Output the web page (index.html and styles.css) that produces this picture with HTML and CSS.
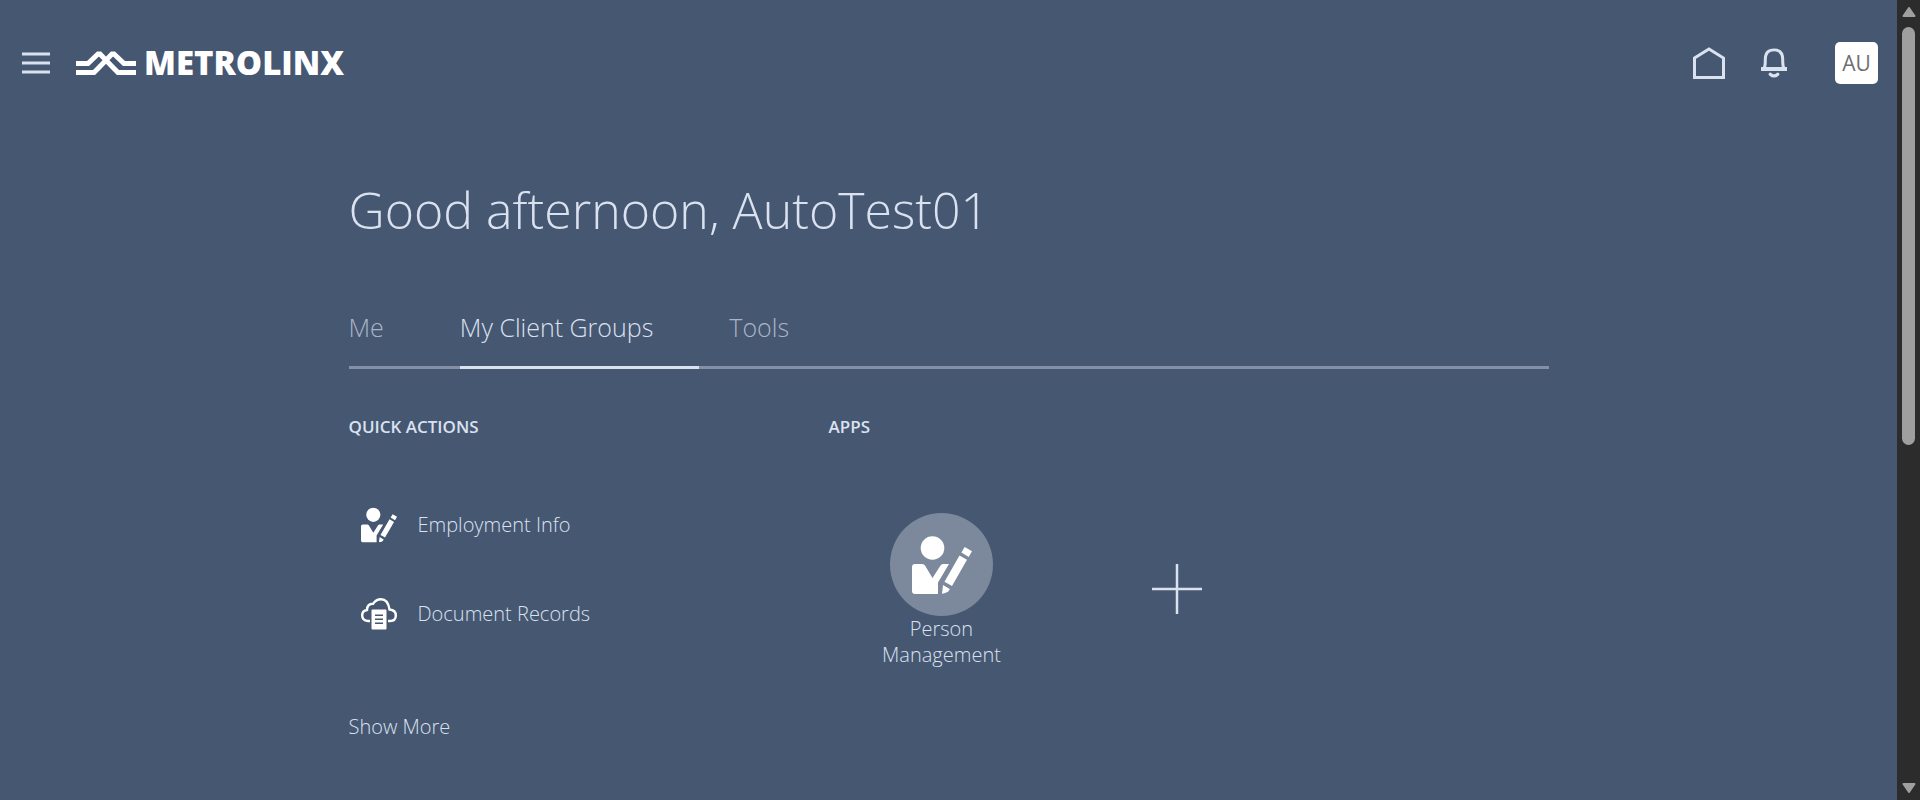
FILE: index.html
```html
<!DOCTYPE html>
<html lang="en">
<head>
<meta charset="utf-8">
<title>Metrolinx</title>
<link rel="stylesheet" href="styles.css">
</head>
<body>
<svg class="symbols" aria-hidden="true">
  <symbol id="person-edit" viewBox="0 0 60 58">
    <circle cx="20.500" cy="12" r="11.800"/>
    <path d="M3 28h7.500q1.500 0 2.500 1.500l7.500 12.500 8-12.500q1-1.500 2.500-1.500h6L26 46.500V58H3q-3 0-3-3V31q0-3 3-3z"/>
    <path d="M47.500 19.500l7.500 4.300L40 50l-7.500-4.300z"/>
    <path d="M52.700 11l7.300 4.300-3.300 5.600-7.300-4.300z"/>
    <path d="M31 49l6.800 4-1.500 2.600q-2.800 1.900-6.300 2.100z"/>
  </symbol>
</svg>
<div class="shell">
  <div class="page">
    <header class="header">
      <button class="icon-button" type="button" aria-label="Navigator">
        <svg class="menu-icon" viewBox="0 0 28 22"><path d="M0 2h28M0 11h28M0 20h28" stroke="currentColor" stroke-width="3"/></svg>
      </button>
      <a class="logo" href="#">
        <svg class="logo-mark" viewBox="0 0 60 24" aria-hidden="true">
          <path d="M0 12.500h12L22 3h2l14 14.500 4 4h18M0 21.500h18l4-4L36 3h2l10 9.500h12" fill="none" stroke="currentColor" stroke-width="5"/>
        </svg>
        <span class="logo-text">METROLINX</span>
      </a>
      <nav class="header-tools" aria-label="Global">
        <a class="icon-button" href="#" aria-label="Home">
          <svg class="home-icon" viewBox="0 0 32 32"><path d="M1.500 11L16 2l14.500 9v19.500h-29z" fill="none" stroke="currentColor" stroke-width="3"/></svg>
        </a>
        <button class="icon-button" type="button" aria-label="Notifications">
          <svg class="bell-icon" viewBox="0 0 26 30">
            <path d="M0 19h2q.8-2 .8-7.500Q2.800.5 13 .5t10.200 11q0 5.500.8 7.500h2v4H0zM5.200 19h15.600q-.6-2-.6-7.500Q20.200 3.300 13 3.300t-7.200 8.200q0 5.500-.6 7.500z" fill="currentColor" fill-rule="evenodd"/>
            <path d="M9.200 26.200q3.800 3.400 7.600 0" fill="none" stroke="currentColor" stroke-width="3.200" stroke-linecap="round"/>
          </svg>
        </button>
        <button class="avatar" type="button">AU</button>
      </nav>
    </header>
    <main class="content">
      <h1 class="greeting">Good afternoon, AutoTest01</h1>
      <nav class="tabs" aria-label="Springboard">
        <a class="tab" href="#">Me</a>
        <a class="tab tab-active" href="#" aria-current="page">My Client Groups</a>
        <a class="tab" href="#">Tools</a>
      </nav>
      <div class="columns">
        <section>
          <h2 class="section-title">QUICK ACTIONS</h2>
          <ul class="actions">
            <li><a class="action" href="#">
              <svg class="action-icon" viewBox="0 0 60 58" aria-hidden="true"><use href="#person-edit"/></svg>
              <span>Employment Info</span>
            </a></li>
            <li><a class="action" href="#">
              <svg class="action-icon" viewBox="0 0 36 32" aria-hidden="true">
                <path d="M9 23H7Q1.200 22.500 1.200 17.500T6 12Q6 6 12 5.800 15 1.200 20 1.200 27 1.200 28.500 11.500 34.800 12 34.800 17.500T29 23h-2" fill="none" stroke="currentColor" stroke-width="2.400"/>
                <path fill-rule="evenodd" d="M11.500 11.500h13q1 0 1 1v18q0 1-1 1h-13q-1 0-1-1v-18q0-1 1-1zM14 16.500v1.500h8v-1.500zM14 20.500v1.500h8v-1.500zM14 24.500v1.500h8v-1.500z"/>
              </svg>
              <span>Document Records</span>
            </a></li>
          </ul>
          <a class="show-more" href="#">Show More</a>
        </section>
        <section>
          <h2 class="section-title">APPS</h2>
          <div class="apps">
            <a class="app" href="#">
              <span class="app-circle"><svg class="app-icon" viewBox="0 0 60 58" aria-hidden="true"><use href="#person-edit"/></svg></span>
              <span class="app-label">Person Management</span>
            </a>
            <button class="add-app" type="button" aria-label="Add app">
              <svg class="plus-icon" viewBox="0 0 50 50"><path d="M0 25h50M25 0v50" stroke="currentColor" stroke-width="2.500"/></svg>
            </button>
          </div>
        </section>
      </div>
    </main>
  </div>
  <div class="scrollbar" aria-hidden="true">
    <svg class="arrow" viewBox="0 0 14 10"><path d="M7 1l5.500 8h-11z" stroke="currentColor" stroke-width="2" stroke-linejoin="round"/></svg>
    <div class="track"><div class="thumb"></div></div>
    <svg class="arrow" viewBox="0 0 14 10"><path d="M7 9L1.500 1h11z" stroke="currentColor" stroke-width="2" stroke-linejoin="round"/></svg>
  </div>
</div>
</body>
</html>
```
FILE: styles.css
```css
* {
  box-sizing: border-box;
}

body {
  margin: 0;
  background: #465772;
  color: #dae1ef;
  font-family: "Open Sans", "Noto Sans", sans-serif;
  font-weight: 300;
}

a {
  color: inherit;
  text-decoration: none;
}

button {
  padding: 0;
  border: 0;
  background: none;
  color: inherit;
  font: inherit;
}

svg {
  display: block;
  fill: currentColor;
}

.symbols {
  display: none;
}

.shell {
  display: grid;
  grid-template-columns: 1fr 23px;
  min-height: 100vh;
}

.header {
  display: flex;
  align-items: center;
  padding: 42px 19px 0 22px;
}

.menu-icon {
  width: 28px;
  height: 22px;
}

.logo {
  display: flex;
  align-items: center;
  gap: 8px;
  margin-left: 26px;
  color: #fff;
}

.logo-mark {
  width: 60px;
  height: 24px;
}

.logo-text {
  font-size: 33px;
  font-weight: 800;
  line-height: 40px;
}

.header-tools {
  display: flex;
  align-items: center;
  margin-left: auto;
}

.home-icon {
  width: 32px;
  height: 32px;
}

.bell-icon {
  width: 26px;
  height: 30px;
  margin: 0 48px 0 36px;
}

.avatar {
  width: 43px;
  height: 42px;
  border-radius: 5px;
  background: #fff;
  color: #6f6f6f;
  font-size: 21px;
  font-weight: 400;
  line-height: 40px;
}

.content {
  max-width: 1200px;
  margin: 0 auto;
}

.greeting {
  margin: 88px 0 0;
  font-size: 50px;
  font-weight: 300;
  line-height: 76px;
}

.tabs {
  display: flex;
  gap: 30px;
  margin-top: 60px;
  box-shadow: inset 0 -3px #8490a5;
}

.tab {
  padding: 0 46px 20px 0;
  border-bottom: 3px solid transparent;
  color: #a9b4c6;
  font-size: 25px;
  line-height: 38px;
}

.tab-active {
  border-color: #dae1ef;
  color: #dae1ef;
}

.columns {
  display: grid;
  grid-template-columns: 2fr 3fr;
}

.section-title {
  margin: 46px 0 0;
  font-size: 17px;
  font-weight: 600;
  line-height: 24px;
}

.actions {
  margin: 41px 0 0;
  padding: 0;
  list-style: none;
}

.action {
  display: flex;
  align-items: center;
  gap: 21px;
  height: 89px;
  padding-left: 12px;
  font-size: 20px;
}

.action-icon {
  width: 36px;
  height: 36px;
  color: #fff;
}

.show-more {
  display: inline-block;
  margin-top: 55px;
  font-size: 20px;
  line-height: 28px;
}

.apps {
  display: flex;
  align-items: center;
  margin-top: 74px;
}

.app {
  display: flex;
  flex-direction: column;
  align-items: center;
  width: 226px;
}

.app-circle {
  display: grid;
  place-items: center;
  width: 103px;
  height: 103px;
  border-radius: 50%;
  background: #7c899c;
  color: #fff;
}

.app-icon {
  width: 60px;
  height: 58px;
}

.app-label {
  width: 130px;
  font-size: 20px;
  line-height: 26px;
  text-align: center;
}

.add-app {
  display: grid;
  place-items: center;
  width: 245px;
  padding-bottom: 3px;
}

.plus-icon {
  width: 50px;
  height: 50px;
}

.scrollbar {
  display: flex;
  flex-direction: column;
  align-items: center;
  padding: 7px 0;
  background: #2c2c2c;
  color: #9f9f9f;
}

.arrow {
  width: 14px;
  height: 10px;
}

.track {
  flex: 1;
  padding: 10px 0;
}

.thumb {
  width: 13px;
  height: 56%;
  border-radius: 7px;
  background: #9f9f9f;
}
```
